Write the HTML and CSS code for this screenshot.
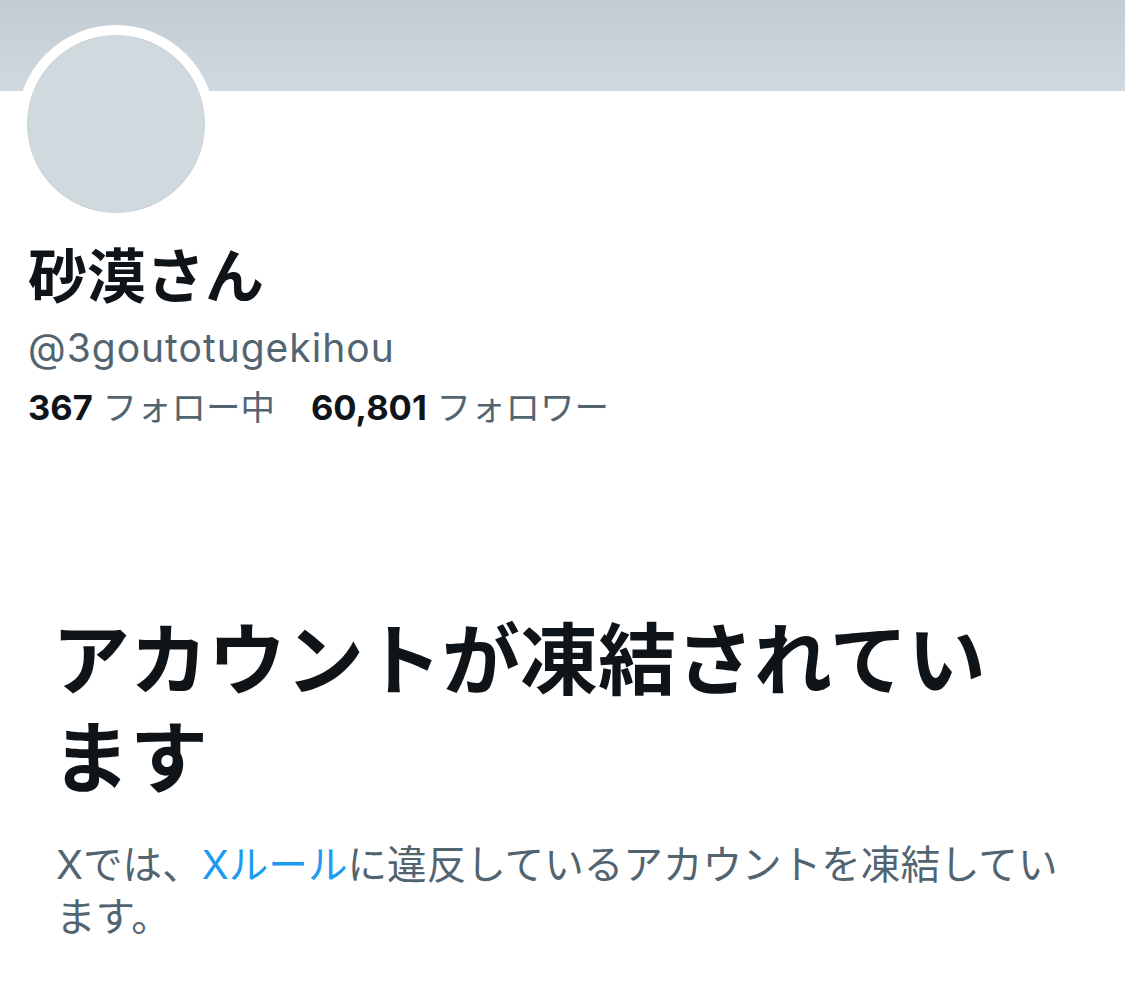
FILE: index.html
```html
<!DOCTYPE html>
<html lang="ja">
<head>
    <meta charset="UTF-8">
    <meta name="viewport" content="width=device-width, initial-scale=1.0">
    <title>砂漠さん (@3goutotugekihou)</title>
    <link rel="stylesheet" href="styles.css">
</head>
<body>
    <div class="banner"></div>

    <div class="profile">
        <div class="avatar"><div class="avatar-inner"></div></div>
        <h1 class="name">砂漠さん</h1>
        <div class="handle">@3goutotugekihou</div>
        <div class="stats">
            <span class="stat"><b>367</b> フォロー中</span>
            <span class="stat"><b>60,801</b> フォロワー</span>
        </div>
    </div>

    <div class="suspended">
        <h2>アカウントが凍結されています</h2>
        <p>Xでは、<a href="#">Xルール</a>に違反しているアカウントを凍結しています。</p>
    </div>
</body>
</html>
```

FILE: styles.css
```css
body {
    margin: 0;
    background: #fff;
    font-family: Inter, "Noto Sans CJK JP", sans-serif;
    color: #0f1419;
}
.banner {
    height: 91px;
    background: linear-gradient(#c4ccd3, #cfd9de);
}
.profile {
    padding: 0 28px;
}
.avatar {
    width: 178px;
    height: 178px;
    margin: -66px 0 0 -11px;
    border: 10px solid #fff;
    border-radius: 50%;
    background: #fff;
}
.avatar-inner {
    width: 100%;
    height: 100%;
    border-radius: 50%;
    background: #cfd9de;
    box-shadow: inset 0 0 0 1px rgba(0, 0, 0, 0.04);
}
.name {
    margin: 16px 0 0;
    font-size: 59px;
    font-weight: 700;
    line-height: 76px;
}
.handle {
    margin-top: 8px;
    font-size: 39px;
    letter-spacing: 1px;
    line-height: 50px;
    color: #536471;
}
.stats {
    display: flex;
    gap: 36px;
    margin-top: 13px;
    font-size: 34.5px;
    line-height: 44px;
    color: #536471;
}
.stats b {
    color: #0f1419;
    font-weight: 700;
}
.suspended {
    padding: 182px 58px 0;
}
.suspended h2 {
    max-width: 1000px;
    margin: 0 0 0 -6px;
    font-size: 78px;
    font-weight: 700;
    line-height: 98px;
}
.suspended p {
    margin: 31px 0 0 -2px;
    font-size: 39.6px;
    line-height: 52px;
    color: #536471;
}
.suspended a {
    color: #1d9bf0;
    text-decoration: none;
}
```
